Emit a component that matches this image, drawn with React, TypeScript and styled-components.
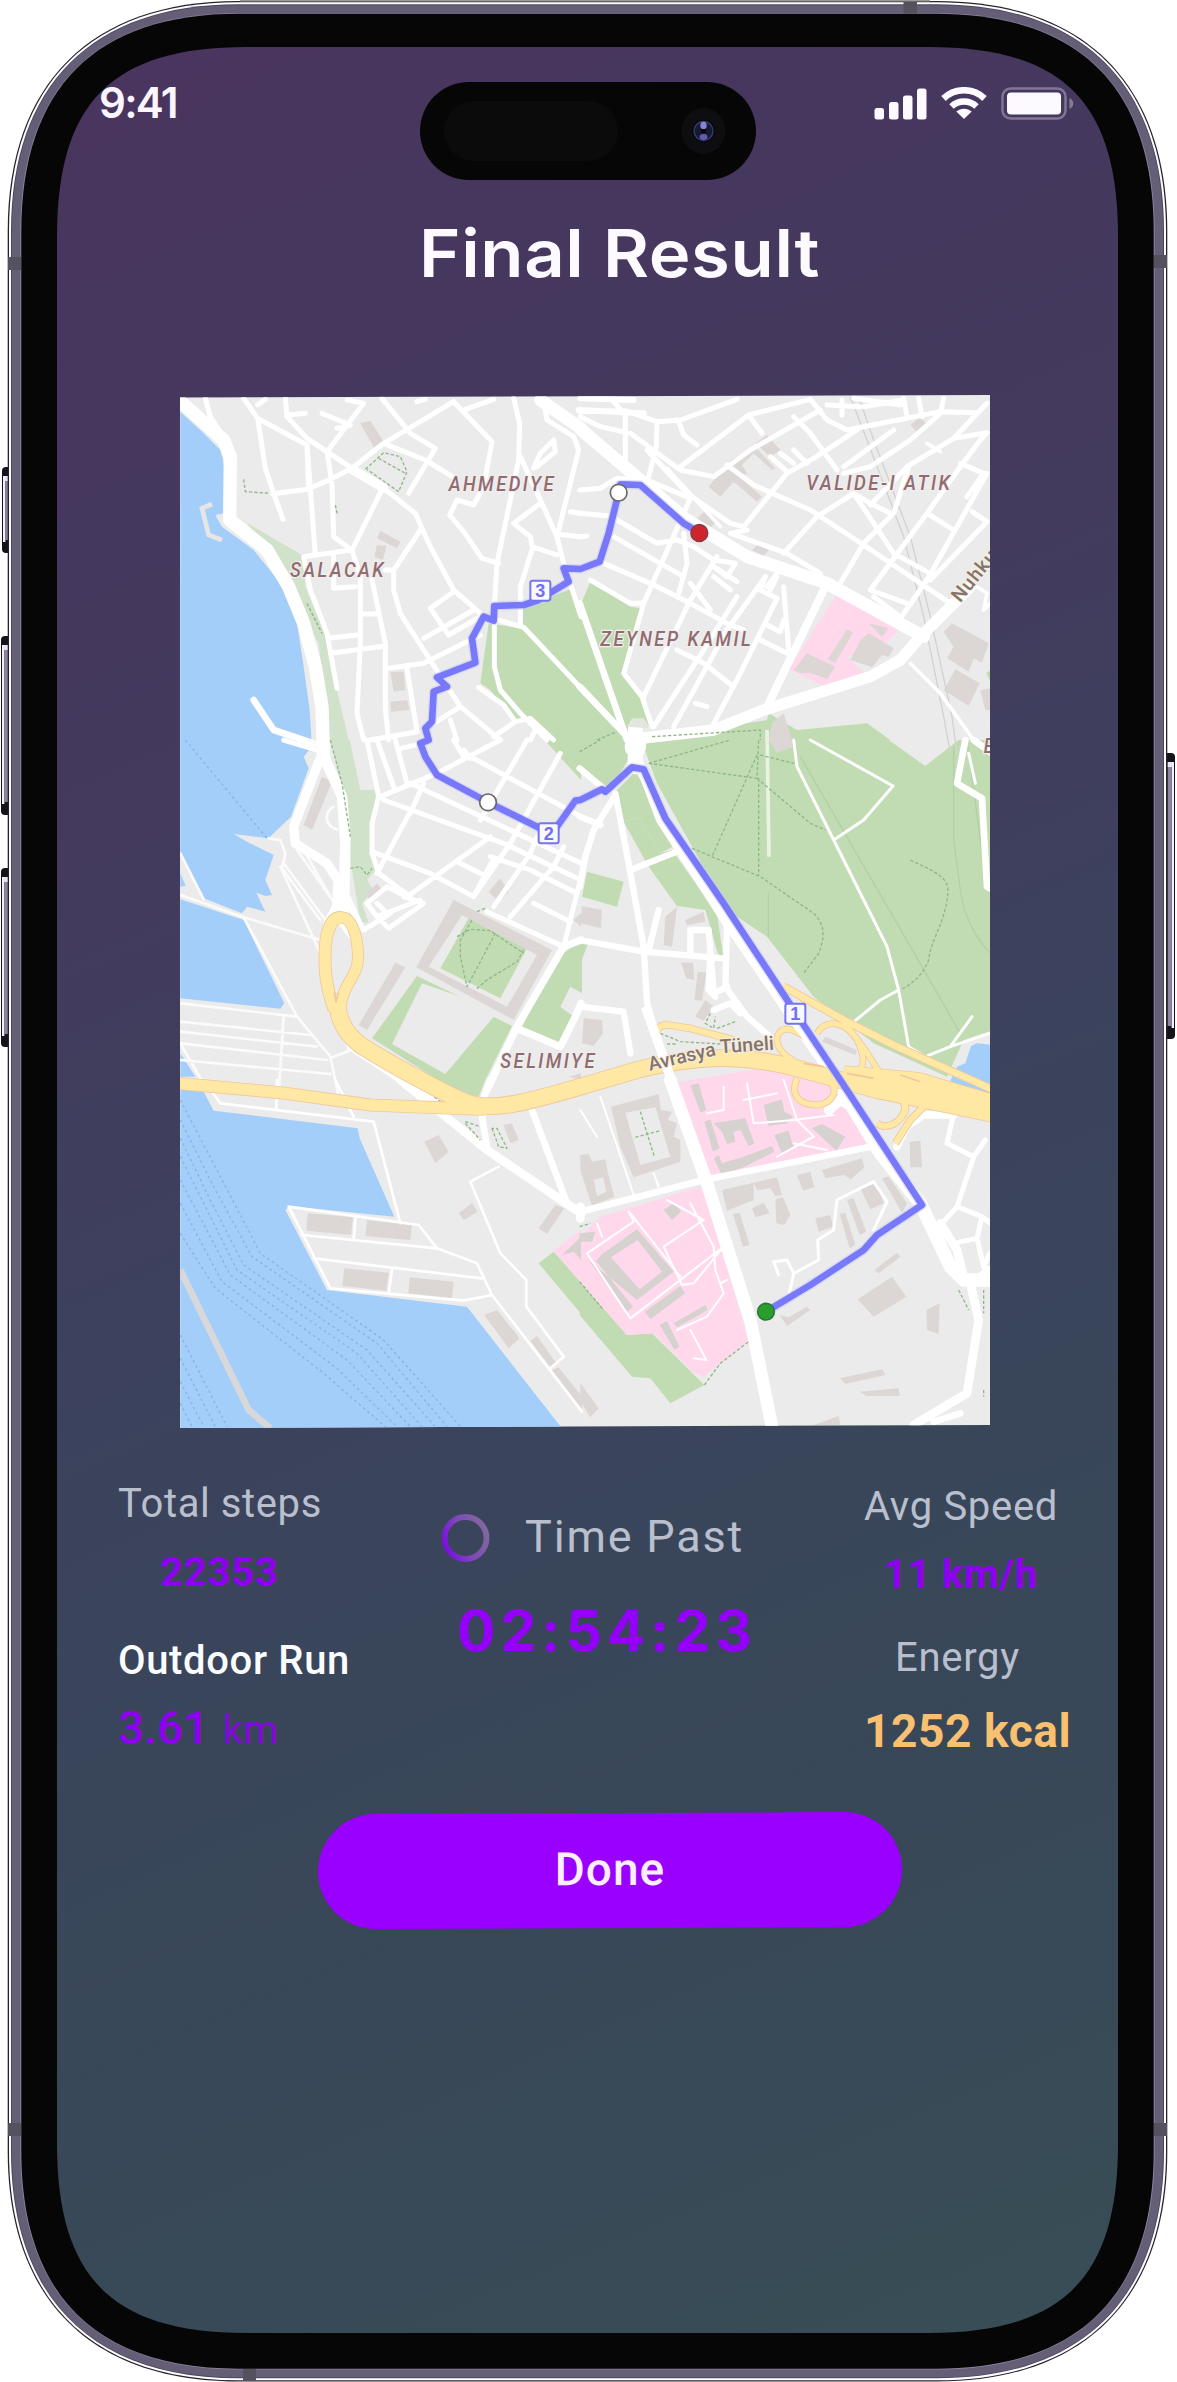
import React from 'react';
import styled, { createGlobalStyle } from 'styled-components';

const GlobalStyle = createGlobalStyle`
  html, body { margin: 0; padding: 0; background: #ffffff; }
  *, *::before, *::after { box-sizing: border-box; }
`;

/* ---------- geometry helpers ---------- */

/** Closed path of a rectangle with continuous (squircle) corners. */
const squircle = (l: number, t: number, r: number, b: number, e: number, c: number) =>
  `M${l} ${t + e}C${l} ${t + c} ${l + c} ${t} ${l + e} ${t}H${r - e}` +
  `C${r - c} ${t} ${r} ${t + c} ${r} ${t + e}V${b - e}` +
  `C${r} ${b - c} ${r - c} ${b} ${r - e} ${b}H${l + e}` +
  `C${l + c} ${b} ${l} ${b - c} ${l} ${b - e}Z`;

/* ---------- styled parts ---------- */

const Device = styled.main`
  position: relative;
  width: 1177px;
  height: 2382px;
  padding: 47px 59px 49px 57px;
  overflow: hidden;
  font-family: Roboto, 'Liberation Sans', sans-serif;
`;

const Bezel = styled.svg`
  position: absolute;
  inset: 0;
  display: block;
`;

const Screen = styled.div`
  position: relative;
  display: flex;
  flex-direction: column;
  width: 1061px;
  height: 2286px;
  background: linear-gradient(157deg, #4a355f 0%, #46375e 14%, #433a5d 30%, #3c425d 50%, #39465a 65%, #384957 84%, #384e56 100%);
  clip-path: path('${squircle(0, 0, 1061, 2286, 190, 55)}');
`;

const Island = styled.svg`
  position: absolute;
  left: 363px;
  top: 35px;
`;

const StatusBar = styled.header`
  display: flex;
  justify-content: space-between;
  align-items: flex-start;
  height: 166px;
  padding: 32px 43px 0 42px;
`;

const Clock = styled.time`
  font: 600 42px/48px Inter, Roboto, sans-serif;
  letter-spacing: -1.7px;
  color: #fbf6ff;
`;

const StatusIcons = styled.div`
  display: flex;
  align-items: flex-start;
  gap: 14px;
  padding-top: 8px;
`;

const Title = styled.h1`
  width: max-content;
  margin: 0 0 102px 362px;
  font: 600 66px/80px Inter, Roboto, sans-serif;
  letter-spacing: 0.6px;
  white-space: nowrap;
  color: #fdfaff;
  transform: scaleX(1.07);
  transform-origin: left;
`;

const MapCard = styled.figure`
  width: 810px;
  height: 1033px;
  margin: 0 0 0 123px;
  clip-path: polygon(0 2.5px, 100% 0, 100% 1030px, 0 100%);
`;

const Stats = styled.section`
  display: grid;
  grid-template-columns: 323px 423px 1fr;
  height: 385px;
  padding-left: 61px;
`;

const Column = styled.div<{ $top: number }>`
  display: flex;
  flex-direction: column;
  align-items: flex-start;
  width: max-content;
  padding-top: ${(p) => p.$top}px;
`;

type TextProps = {
  $size?: number;
  $weight?: number;
  $color?: string;
  $track?: number;
  $gap?: number;
  $indent?: number;
};

const Label = styled.span<TextProps>`
  margin: ${(p) => p.$gap ?? 0}px 0 0 ${(p) => p.$indent ?? 0}px;
  font-size: ${(p) => p.$size ?? 40}px;
  font-weight: ${(p) => p.$weight ?? 400};
  line-height: ${(p) => ((p.$size ?? 40) > 41 ? 54 : 48)}px;
  letter-spacing: ${(p) => p.$track ?? 0}px;
  color: ${(p) => p.$color ?? '#b9bfcd'};
  white-space: nowrap;
`;

const Value = styled(Label)`
  color: ${(p) => p.$color ?? '#8f00f2'};
`;

const Unit = styled.small`
  margin-left: 2px;
  font-size: 40px;
  font-weight: 400;
  letter-spacing: 0.4px;
  color: #8208dc;
`;

const TimeRow = styled.div`
  display: flex;
  align-items: center;
  gap: 35px;
`;

const Timer = styled.strong`
  margin: 35px 0 0 16px;
  font: 700 57px/64px Inter, Roboto, sans-serif;
  letter-spacing: 5px;
  white-space: nowrap;
  color: #9500fb;
`;

const DoneButton = styled.button`
  display: flex;
  align-items: center;
  justify-content: center;
  width: 584px;
  height: 115px;
  margin-left: 261px;
  padding: 0 0 4px;
  border: 0;
  border-radius: 58px;
  background: #9900ff;
  color: #fbeeff;
  font: 500 46px/54px Roboto, sans-serif;
  letter-spacing: 1px;
  transform: skewY(-0.22deg);
`;

/* ---------- map ---------- */

type P = { d: string; w?: number };

/** The map is authored in six sheets; each sheet has its own origin. */
const SHEETS = {
  a: 'translate(0 0)',
  b: 'translate(1230 0)',
  c: 'translate(0 1050)',
  d: 'translate(1230 1050)',
  e: 'translate(0 2070)',
  f: 'translate(1230 2070)',
} as const;

type Sheet = keyof typeof SHEETS;
type Layer = Partial<Record<Sheet, P[]>>;

const water: Layer = {
  a: [
    {
      d: 'M30 65L100 130L150 180L163 230L160 370L135 375L155 410L250 480L330 580L380 700L400 830L418 960L425 1070L400 1100L415 1135L362 1280L330 1310L295 1345L190 1332L230 1355L310 1395L285 1470L305 1515L285 1518L258 1508L285 1565L230 1550L215 1570L100 1525L60 1450L30 1390Z',
    },
  ],
  c: [
    { d: 'M30 400L46 438L30 440ZM30 478L220 540L342 790L330 806L30 775ZM30 940L75 1010L30 1010Z' },
  ],
  d: [{ d: 'M1110 1022L1130 980L1155 970L1172 918L1190 910L1240 915V1100Z' }],
  e: [
    { d: 'M30 20L100 35L130 92L562 145L568 175L672 410L355 378L345 390L470 630L890 680L1175 1045H30Z' },
  ],
};

const greens: Layer = {
  a: [
    { d: 'M1055 652L1200 598L1232 680V902L1060 720ZM955 700L1065 718L1232 892V1170L1130 1058L1070 990L1030 985L960 900L930 880Z' },
  ],
  b: [
    { d: 'M30 575L150 650L180 655L130 850L185 920L215 1000L140 1040L60 1060H-2V650Z' },
    { d: 'M-2 910L140 1050H-2ZM185 1050L560 990L565 970L650 1020L860 1000L930 1050Z' },
    { d: 'M1218 850L1232 838V880Z' },
  ],
  d: [
    { d: 'M190 20L210 0H925L1035 78L1135 0H1240V870L1150 900L1100 1010L880 910L700 770L560 590L440 510L230 130Z' },
    { d: 'M130 245L175 232L238 340L275 330L410 520L430 660L412 640L375 510L290 498L205 380Z' },
    { d: 'M-2 0H140L150 50L100 130L70 140L0 80ZM20 395L130 425L110 500L5 470ZM-2 610L22 615L0 670Z' },
    { d: 'M105 155L165 95L240 220L278 320L238 340L175 232L130 245Z' },
  ],
  c: [
    { d: 'M895 535L1070 625L990 775L810 685ZM1165 650L1235 600V760L1200 740L1170 800L1210 830L1160 920L1050 870Z' },
    { d: 'M740 708L865 768L755 730L665 912L825 1002L970 830L1025 858L930 1050H850L605 895Z' },
  ],
  e: [{ d: 'M815 0H945L925 50L870 40ZM1105 550L1150 515L1235 610V705Z' }],
  f: [{ d: 'M-2 605L140 765L215 760L372 915L270 970L210 895L155 890L-2 705Z' }],
};

const paleGreens: Layer = {
  a: [{ d: 'M232 400L395 495L405 590L470 745L500 900L535 1050H478L445 760Z' }],
  c: [{ d: 'M480 0H538L570 150H620L600 300L615 390L590 420L610 450L575 490L595 550L570 545L530 300L515 150Z' }],
};

const pinks: Layer = {
  b: [{ d: 'M770 612L960 712L900 780L800 800L850 848L730 888L625 838Z' }],
  d: [{ d: 'M270 1030L540 985L640 1000L800 1060V1100H300Z' }],
  f: [{ d: 'M290 10L760 0L800 90L840 130L870 200L400 305ZM-2 470L60 410L365 318L505 785L370 890L340 880L220 760L140 765L-2 605Z' }],
  e: [{ d: 'M1150 512L1232 450V610Z' }],
};

const buildings: Layer = {
  a: [
    { d: 'M570 100L600 92L640 155L610 172ZM630 422L690 455L680 475L620 445ZM620 465L648 468L638 510L612 500ZM660 845H700L705 900L670 905ZM660 935L710 930L718 960L662 965Z' },
  ],
  b: [
    { d: 'M525 160L560 135L600 180L570 200ZM445 215L520 165L585 235L575 240L520 190L485 225L500 250L480 262ZM385 290L430 235L460 245L545 320L530 335L460 275L420 320ZM350 385L378 360L412 392L385 418ZM515 480L540 455L570 475L550 498ZM990 105L1020 80L1045 110L1015 132Z' },
    { d: 'M1090 725L1115 700L1225 760L1205 818L1180 805L1165 845L1100 805L1120 770ZM1090 900L1125 838L1198 880L1165 948ZM1200 900L1232 895V960H1215ZM565 1050L575 1000L610 970L635 1050Z' },
    { d: 'M800 718L818 728L765 818L742 808ZM680 790L765 830L740 868L690 848L660 850L640 840ZM865 730L940 775L925 800L905 795L875 832L810 810L840 750ZM865 700L925 715L905 740Z' },
  ],
  c: [
    { d: 'M455 110L485 125L425 270L400 255ZM585 465L620 430L635 450L600 480ZM675 668L705 682L590 870L565 855ZM955 455L990 415L1015 455L985 485Z' },
    { d: 'M850 480L1145 630L1030 840L738 682ZM875 525L775 680L1010 800L1100 645Z' },
    { d: 'M1210 540L1232 520V560ZM1195 1010L1232 1000V1020Z' },
  ],
  d: [
    { d: 'M5 498L65 510L62 565L0 550ZM255 530L290 500L275 620L250 615ZM315 540L370 515L375 545L320 555ZM302 668L338 668L342 720L318 715ZM352 695L378 698L365 782L342 780ZM345 830L375 780L400 800L370 842ZM10 835L65 840L68 880L40 918L5 910ZM565 0H635V22L590 38ZM735 890L830 930L825 945L725 905Z' },
  ],
  e: [
    { d: 'M762 185L805 165L835 215L795 250ZM1000 135L1025 130L1045 180L1020 190ZM865 400L905 370L922 395L880 420ZM1105 445L1155 375L1182 385L1130 462ZM412 400L548 412L542 465L408 452ZM590 420L725 435L720 480L585 468ZM522 565L655 578L648 632L516 618ZM718 592L850 605L845 655L714 640ZM942 705L980 690L1048 775L1015 805ZM1080 782L1100 768L1158 850L1140 862ZM1145 870L1165 862L1235 950V990Z' },
  ],
  f: [
    { d: 'M92 80L235 42L242 90L275 95L262 120L290 130L280 170L300 180V245L160 292L120 200ZM135 98L180 255L270 230L225 82Z' },
    { d: 'M0 225L25 222L35 245L75 238L82 275L102 350L35 378L0 270ZM40 300L50 348L78 335L68 292Z' },
    { d: 'M425 330L520 308V360L440 392ZM520 308L590 292L605 345L585 348L570 325L530 330ZM585 358L608 352L630 405L612 435L588 430ZM515 385L550 368L568 400L525 412ZM650 285L690 275L702 322L668 332ZM725 270L845 235L852 262L812 298L790 285L735 295ZM458 402L478 398L508 495L488 500ZM705 415L750 405L758 440L715 455ZM778 402L795 398L825 495L808 505ZM800 360L820 355L858 455L838 465ZM840 325L890 310L910 370L870 388ZM905 295L925 290L980 370L965 398Z' },
    { d: 'M882 570L950 518L960 530L895 580ZM832 658L935 590L978 650L880 710ZM1038 690L1078 670L1075 762L1040 750ZM598 705L625 712L680 680L690 690L620 738ZM778 895L905 868L915 885L795 912ZM838 935L955 925L958 948H860ZM700 1035L775 1008L780 1035ZM988 185L1020 182L1025 262H990ZM0 910L55 985L30 1012L0 965Z' },
  ],
};

const clinics: Layer = {
  f: [
    { d: 'M330 15L355 10L378 90L360 98ZM372 125L390 118L418 205L398 215ZM400 130L495 115L522 190L505 198L480 150L460 155L465 185L440 192L425 155ZM400 235L415 225L425 250L485 232L575 198L582 215L490 262L425 285ZM550 75L605 58L612 95L638 108L620 130L565 138ZM582 165L625 152L640 205L605 222ZM695 145L725 132L795 170L768 212Z' },
    { d: 'M62 525L170 448L280 575L170 660L30 545L50 540ZM92 532L178 628L245 575L172 480ZM28 545L45 540L158 680L140 695ZM193 695L300 618L315 640L210 718ZM280 730L375 675L382 690L290 742ZM238 735L260 722L298 800L282 810ZM250 390L282 368L302 395L275 420ZM-2 460L45 455L35 485H-2Z' },
  ],
  e: [{ d: 'M1175 525L1232 470V540L1210 515Z' }],
};

const minorRoads: Layer = {
  a: [
    { d: 'M105 25L120 80L165 150M220 25L262 85L285 235L310 310L338 388M262 45L285 28M262 85L410 165L435 495M345 25L350 80L410 145L545 235M355 75L405 70M455 70L540 105L500 115M530 30L580 40L470 185L485 280L490 440L545 480M305 312L410 298L480 268L545 235L640 160L850 35M740 35L765 28M635 25L720 130L795 175L715 310M640 160L765 210L850 262M850 35L965 155L940 290L910 345L860 330L838 375L880 425L935 505L985 520M885 58L970 28M1030 25L1048 100L1045 210L980 520L972 650V830L990 900L1050 970L1130 1050M410 170L415 300' },
    { d: 'M545 238L640 295L735 370L780 470L850 600L930 670M635 298L545 480L400 500L420 600L470 730L500 895M545 480L570 560V760L560 970L580 1050M490 500V595L555 590M605 570L645 760V960L655 1050M575 672H618M475 745L560 735M480 790L645 768M655 835L760 820L930 735M760 745L910 660M750 420L670 540V600L690 670L760 780L870 950L990 1050M645 540H670M850 605L780 655L835 735L930 680M710 835L740 1025L600 1050M790 1000L870 950M840 990L860 1050' },
    { d: 'M1120 30L1130 90L1210 140L1225 180L1160 440M1050 200L1110 330L1160 440L1180 520M1090 235L1110 190L1150 150L1155 185L1100 230M1110 340L1030 400L1080 440L1085 470L1160 495M1160 432L1230 440M1200 365L1230 370M1085 480L1050 590V700M985 690L1060 712L1232 895M925 892L1000 945L1035 995L970 1040M1180 520L1232 680M1035 995L1080 985L1150 1050M1080 1050L1100 1010' },
  ],
  b: [
    { d: 'M-2 65L135 62L230 95L300 90L470 28M135 62V230M95 28L130 70M230 95L228 170L205 260M0 80L60 110L150 130L300 240L400 260L510 180L720 60M295 95L310 135L350 165M300 230L505 75L690 28M505 75L545 130M440 225L520 285L690 360L850 465L1110 640M690 28L740 90L800 120L1080 65L1190 68M640 80L690 130L770 240M830 120L700 205L620 250L490 410L450 400L320 310L200 180M570 200L620 245M600 190L640 220M640 180L680 220M740 45L840 50M785 30V75M820 25L960 45M850 50L970 30M970 25L980 80M1015 25L1025 80M1090 25L1080 70L990 150L870 230L790 250M790 230L940 120M1220 40L1120 145L980 230L870 345M1120 145L1220 128L1200 150L1140 230L1040 370L870 600M1140 220L1210 250L1160 320M1220 250L1040 570L960 685M1040 370L1120 420M1175 365L1220 395L1050 570M820 310L940 490L1040 545M870 340L820 310L710 380L610 490M985 230L940 370L850 460L780 580M930 370L870 340M870 600L980 640M880 620L960 680' },
    { d: 'M-2 300L60 295L110 265L200 270L330 325M-2 370L90 378L230 460L290 450L340 470L400 510M0 440L20 438M100 440L310 560M70 520L210 580L330 640L440 700L490 720M30 570L150 640H185M330 325L190 640L130 850L185 920L215 1010M310 430L320 520L295 610M410 500L330 630L190 920M400 510L465 520L440 560L400 530L470 575M400 560L450 600M330 580L390 660M555 560L440 720L280 1010M555 560L540 600L590 625L480 850L400 1000M610 590L625 780M590 560L570 600M560 705L600 725L610 690M470 620L370 780L220 1010M530 745L620 790M290 780L370 820L460 890M345 940L380 950M500 420L450 430L620 490L720 550M590 550L560 590' },
    { d: 'M990 820L1080 910L1180 1050M1230 640L1210 660L1220 610L1190 590M1040 160L1080 185M260 235L420 410', w: 11 },
  ],
  c: [
    { d: 'M440 30L340 0M590 0L625 170L605 250V340L625 400L720 470M620 0L670 140M675 0L710 130M630 170L800 100L990 0M850 0L880 50M690 25L760 10M640 180L1000 310L1232 420M720 130L1232 370M605 335L780 400L910 470L970 355M720 215L620 400M760 130L720 220M900 50L1232 230M1070 0L930 240M1170 40L1020 310L910 470M1100 290L1080 340L970 500M1180 320L1150 380L1020 530M960 290L710 470L650 440L590 490L620 530L750 480M620 490L650 520M620 530L655 565L760 490L700 470M580 570L660 520M860 365L940 405M960 350L1080 390L1220 460M1090 490L1200 545M950 515L1180 620M1225 440L1180 620M880 30L900 55' },
    { d: 'M1180 620L1232 600M1180 620L1040 860L950 1050M1040 865L1170 920L1215 830L1232 790', w: 22 },
  ],
  d: [
    { d: 'M-2 85L70 145M105 160L145 370L190 620L200 790L240 920L280 1060M105 165L40 270L15 350L-2 440M0 230L60 255M150 390L290 335M-2 600L190 635L430 655M235 510L205 630M330 640V570H385L400 760L440 740M440 560L435 740L500 830L580 900M0 800L130 815L150 940M390 640L385 750L405 770M400 810L450 790L480 820', w: 19 },
    { d: 'M640 0L650 80L760 300L920 620L955 750L985 920L1035 950L1110 920L1228 880M690 0L938 138L850 240L760 300M815 850L900 780L955 750M1110 920L1175 830M1165 40L1185 130', w: 9 },
    { d: 'M1155 0L1130 130L1205 175L1220 440L1240 450M1180 0L1235 40', w: 20 },
  ],
  e: [
    { d: 'M100 0L150 70L610 125L690 430M320 0L318 90M495 0L550 110M355 380L745 435L800 505L920 550L965 645L1235 995M355 380L480 625L880 662L965 645M395 465L800 505M430 535L935 595M555 415L550 480M665 570L655 640M985 260L900 305L990 520L1068 600V680L1180 830L1140 865', w: 8 },
  ],
  f: [
    { d: 'M60 50L160 345M0 90L50 170M220 280L235 320M145 395L160 425L20 520L150 715L430 500L340 610L305 615L250 500L370 420L260 360M150 400L300 590M330 370L400 500L405 570L430 640L380 710L290 750M330 750L378 840L340 835M50 430L65 470M430 20V90L380 100M500 10L520 130L640 120L760 105M640 190L740 210M610 0L650 120L700 170L590 230M490 60L590 40M440 600L420 610', w: 6 },
    { d: 'M625 650L640 580L715 540L712 480L760 450L770 360L880 305L920 365L880 450M640 580L620 540L580 545L595 585', w: 9 },
    { d: 'M1120 100L1100 190L1180 230L1215 180M1180 230L1130 380L1085 430M1130 380L1205 410L1190 475L1120 490M1190 475L1210 560L1228 520M1205 410L1230 430', w: 15 },
  ],
};

const majorRoads: Layer = {
  a: [
    { d: 'M25 30L160 150L180 200L178 390L290 480L355 590L400 700L435 830L455 950L460 1110', w: 40 },
    { d: 'M250 930L310 1020L430 1060', w: 20 },
    { d: 'M545 238L640 295', w: 28 },
    { d: 'M1110 30L1232 115', w: 38 },
  ],
  b: [
    { d: 'M-2 115L150 245L320 390L500 500L740 580L1030 740', w: 38 },
    { d: 'M1170 590L1020 740L960 810L870 860L550 960L400 1020L180 1045', w: 34 },
    { d: 'M740 580L560 950', w: 24 },
    { d: 'M-2 640L140 1050M-2 890L150 1050', w: 20 },
    { d: 'M0 25L160 30M-5 60L190 70', w: 18 },
  ],
  c: [
    { d: 'M455 40L370 260L375 310L470 370L515 440V520', w: 28 },
    { d: 'M465 60L515 170L525 300L520 530M505 430L500 520L560 600', w: 32 },
    { d: 'M470 550L520 450L570 560', w: 22 },
    { d: 'M540 920L800 1090', w: 22 },
  ],
  d: [
    { d: 'M160 0L180 80L240 240L440 550L700 930L830 1110', w: 26 },
    { d: 'M165 -30V80', w: 46 },
  ],
  e: [
    { d: 'M690 0L950 210L1232 400', w: 26 },
    { d: 'M960 0L930 80L950 200M1085 90L1190 370', w: 20 },
  ],
  f: [
    { d: 'M270 0L380 310L510 720L575 1040', w: 38 },
    { d: 'M780 20L900 220L1020 370L1110 560L1150 600L1240 600', w: 40 },
    { d: 'M0 395L370 300L870 200', w: 20 },
    { d: 'M0 380V415', w: 26 },
    { d: 'M1170 610L1195 720L1160 940L1000 1035', w: 26 },
    { d: 'M950 200L980 140L1030 105L1120 105', w: 22 },
    { d: 'M1080 430L1130 510L1150 590M1225 570L1180 610', w: 26 },
    { d: 'M745 90L780 60L830 90', w: 30 },
    { d: 'M1060 1025L1140 1000', w: 20 },
  ],
};

const portLines: Layer = {
  c: [
    { d: 'M30 340L100 478M30 465L220 532L450 600M220 532L380 830L480 950L505 1070M330 380L450 640M340 370L480 560M380 330L500 500M400 330L480 470M30 790L380 830M30 845L420 885M30 875L440 920M30 910L470 960M30 960L480 1002M340 830L325 1060M30 910L110 1050M480 955L555 925M295 295L330 300L345 340L335 385L450 540M490 200A36 36 0 0 0 500 268' },
  ],
};

const dashes: Layer = {
  a: [{ d: 'M220 268L225 305L300 310M585 238L640 188L690 200L710 245L685 305L590 238M625 205L705 250M410 640L455 730M495 345L500 370' }],
  b: [{ d: 'M50 1050L110 1025M215 1040L540 1020V1050' }],
  c: [{ d: 'M480 0L515 130L540 290M540 385L570 380L590 405L605 385M905 540L870 600V650L890 740L975 580M860 590L900 568L960 572L1060 640M1060 630L1040 665L950 720L915 750M920 515L945 505' }],
  d: [{ d: 'M-2 35L60 0M205 70L450 0M205 70L530 115L535 0M540 45L640 70M530 45L395 350M535 115V405M530 115L690 250L735 270M335 325L540 410L700 520C740 560 730 600 715 640L670 700M990 360C1050 390 1100 405 1103 450C1100 540 1050 600 1045 660C1030 700 1000 730 960 750M390 820L375 850L400 865L405 830M410 865L465 845M240 880L300 905L420 912M260 912H290' }],
  e: [{ d: 'M885 125L930 140M885 130L930 180M965 145L985 200L1010 205L980 145ZM780 40L815 70L840 75' }],
  f: [{ d: 'M180 95L222 230M165 172L240 152M372 915L420 850L505 785M1135 630L1165 690M1210 630V700M-2 440L30 430M-2 605L70 690M1210 930V950' }],
};

const ferryLines = [
  'M45 1050L290 1345',
  'M30 2130L150 2360L270 2590L640 2850L870 3110',
  'M30 2190L130 2390L245 2600L620 2860L830 3110',
  'M30 2245L115 2420L220 2625L590 2880L795 3110',
  'M30 2300L200 2640L560 2890L755 3110',
  'M30 2370L180 2655L530 2910L720 3110',
  'M30 2440L155 2675L500 2935L680 3110',
  'M30 2530L135 2695L460 2950L645 3110',
  'M30 2835L170 3110',
  'M30 2905L135 3110',
  'M30 2975L100 3110',
  'M30 3040L65 3110',
];

const highways: P[] = [
  { d: 'M25 2080L330 2108L600 2145L930 2158L1060 2140L1230 2096', w: 34 },
  { d: 'M512 1582C480 1582 464 1630 464 1700C464 1770 472 1800 492 1860', w: 34 },
  { d: 'M512 1582C545 1582 563 1640 563 1700C563 1765 520 1770 508 1860', w: 31 },
  { d: 'M497 1815C503 1890 520 1925 570 1965C640 2010 800 2100 890 2138C960 2165 1060 2140 1230 2090L1400 2040C1600 1990 1740 1995 1900 2040L2120 2100L2470 2172', w: 48 },
  { d: 'M1840 1790L2020 1890L2180 1970L2470 2100', w: 20 },
  { d: 'M1460 1925C1470 1890 1510 1910 1560 1915L1690 1950', w: 18 },
  { d: 'M1990 2070C1830 2010 1800 1960 1830 1925C1850 1905 1900 1925 1960 1995M1940 1930C1970 1880 2030 1900 2060 1950C2090 2010 2080 2040 2050 2060M2020 1900C2080 1960 2100 2010 2130 2050', w: 15 },
  { d: 'M1880 2065C1860 2110 1880 2145 1940 2145C1990 2140 2000 2100 1985 2085', w: 16 },
  { d: 'M2060 2090C2180 2110 2220 2130 2200 2170C2180 2210 2140 2215 2120 2200M2300 2110L2220 2190L2175 2260', w: 18 },
  { d: 'M2020 2060L2240 2080L2470 2148', w: 64 },
];

const routePath =
  'M1787 2765L1920 2685L2080 2580L2120 2535L2255 2445L2010 2070L1890 1890L1660 1540L1485 1285L1420 1138L1385 1132L1305 1205L1295 1198L1230 1230L1215 1232L1160 1310L1130 1325L955 1238L800 1155L765 1100L750 1060L775 1050L765 1015L785 995L790 905L830 890L800 862L915 818L905 745L940 680L970 692L972 648L1060 645L1105 630L1195 575L1180 535L1230 537L1288 515L1315 430L1342 320L1350 283L1410 285L1540 400L1587 428';

const Sheets = ({ layer, render }: { layer: Layer; render: (p: P, key: number) => React.ReactNode }) => (
  <>
    {(Object.keys(layer) as Sheet[]).map((s) => (
      <g key={s} transform={SHEETS[s]}>
        {layer[s]!.map(render)}
      </g>
    ))}
  </>
);

const Areas = ({ layer, fill }: { layer: Layer; fill: string }) => (
  <g fill={fill} fillRule="evenodd">
    <Sheets layer={layer} render={(p, i) => <path key={i} d={p.d} />} />
  </g>
);

const Lines = ({ layer, color, width, dash }: { layer: Layer; color: string; width: number; dash?: string }) => (
  <g fill="none" stroke={color} strokeLinejoin="round" strokeLinecap={dash ? 'butt' : 'round'} strokeDasharray={dash}>
    <Sheets layer={layer} render={(p, i) => <path key={i} d={p.d} strokeWidth={p.w ?? width} />} />
  </g>
);

const District = ({ x, y, w, children }: { x: number; y: number; w: number; children: string }) => (
  <text
    x={x}
    y={y}
    textLength={w}
    lengthAdjust="spacingAndGlyphs"
    fontFamily="Roboto, sans-serif"
    fontStyle="italic"
    fontWeight={500}
    fontSize={61}
    letterSpacing={8}
    fill="#906b70"
    stroke="#f2eeee"
    strokeWidth={8}
    strokeLinejoin="round"
    paintOrder="stroke"
  >
    {children}
  </text>
);

const Milestone = ({ x, y, n }: { x: number; y: number; n: number }) => (
  <g>
    <rect x={x - 30} y={y - 30} width={60} height={60} rx={7} fill="#f8f8ff" stroke="#7674f2" strokeWidth={6} />
    <text x={x} y={y + 20} textAnchor="middle" fontFamily="'Liberation Sans', Arial, sans-serif" fontWeight={700} fontSize={54} fill="#716ff0">
      {n}
    </text>
  </g>
);

const RouteMap = () => (
  <svg width="810" height="1033" viewBox="29 15 2430 3099" display="block">
    <rect x="29" y="15" width="2430" height="3099" fill="#ebebeb" />
    <Areas layer={water} fill="#a3cefa" />
    <g fill="none" stroke="#86b2ea" strokeWidth={4} strokeDasharray="8 9">
      {ferryLines.map((d) => (
        <path key={d} d={d} />
      ))}
    </g>
    <path d="M30 2640L235 3060L300 3115" fill="none" stroke="#d8d8da" strokeWidth={20} />
    <path d="M125 342L95 355L115 435L155 450" fill="none" stroke="#e6e6e6" strokeWidth={14} />
    <Areas layer={paleGreens} fill="#d0e2c9" />
    <Areas layer={greens} fill="#c1dcb3" />
    <Areas layer={pinks} fill="#ffd8ec" />
    <Areas layer={buildings} fill="#dcd7d5" />
    <Areas layer={clinics} fill="#d6d2d0" />
    <g fill="none" stroke="#d2d3cf" strokeWidth={4}>
      <path d="M2040 20L2090 150L2200 440L2260 680L2320 980L2340 1090M2065 20L2110 150L2220 440L2280 680L2345 980L2360 1090" />
      <path d="M1890 1100L2180 1600L2370 1930" stroke="#b3cfa5" />
      <path d="M2350 1070V1350L2370 1500C2380 1580 2420 1650 2460 1690M2390 1050L2450 1500" stroke="#b3cfa5" />
      <path d="M1794 1510V1640" stroke="#b3cfa5" />
    </g>
    <path d="M1790 1020L1796 1400" fill="none" stroke="#ffffff" strokeOpacity={0.65} strokeWidth={11} />
    <Lines layer={portLines} color="#fbfbfb" width={8} />
    <Lines layer={minorRoads} color="#ffffff" width={15} />
    <Lines layer={majorRoads} color="#ffffff" width={26} />
    <circle cx="1395" cy="1070" r="32" fill="#ffffff" />
    <path d="M1370 1010L1385 985H1420L1440 1015Z" fill="#e5e5e0" />
    <Lines layer={dashes} color="#8fb886" width={4} dash="10 6" />
    <g fill="none" strokeLinejoin="round">
      {highways.map((p) => (
        <path key={p.d} d={p.d} stroke="#f0c79b" strokeWidth={(p.w ?? 20) + 5} />
      ))}
      {highways.map((p) => (
        <path key={p.d} d={p.d} stroke="#ffe8a4" strokeWidth={p.w} />
      ))}
      <path d="M1900 2020L1960 2030M2030 2050L2110 2065M2190 2055L2250 2075M492 1808L497 1835L504 1808" stroke="#f0c79b" strokeWidth={5} />
    </g>
    <path d="M1425 1850L1510 2090" stroke="#ffffff" strokeWidth={28} fill="none" />
    <path d="M1870 1890L1960 2010" stroke="#ffffff" strokeWidth={26} fill="none" />

    <path d={routePath} fill="none" stroke="#c9c8fa" strokeOpacity={0.55} strokeWidth={28} strokeLinejoin="round" />
    <path d={routePath} fill="none" stroke="#7878fb" strokeWidth={20} strokeLinejoin="round" />

    <District x={835} y={303} w={322}>AHMEDIYE</District>
    <District x={359} y={560} w={288}>SALACAK</District>
    <District x={1908} y={300} w={438}>VALIDE-I ATIK</District>
    <District x={1290} y={767} w={458}>ZEYNEP KAMIL</District>
    <District x={990} y={2035} w={290}>SELIMIYE</District>
    <District x={2440} y={1090} w={36}>E</District>
    <g fontFamily="Roboto, sans-serif" fontWeight={500} fill="#86736a" stroke="#f4efe2" strokeWidth={6} paintOrder="stroke">
      <text transform="translate(1438 2042) rotate(-13)" fontSize={58} textLength={206} lengthAdjust="spacingAndGlyphs">
        Avrasya
      </text>
      <text transform="translate(1650 1990) rotate(-4)" fontSize={58} textLength={162} lengthAdjust="spacingAndGlyphs">
        Tüneli
      </text>
      <text transform="translate(2370 640) rotate(-51)" fontSize={58} letterSpacing={3}>
        Nuhku
      </text>
    </g>

    <Milestone x={1110} y={602} n={3} />
    <Milestone x={1135} y={1330} n={2} />
    <Milestone x={1875} y={1871} n={1} />
    <g stroke="#6b6868" strokeWidth={5}>
      <circle cx={1345} cy={308} r={25} fill="#ffffff" />
      <circle cx={953} cy={1237} r={25} fill="#ffffff" />
      <circle cx={1587} cy={429} r={25} fill="#d0242b" stroke="#8c3a45" />
      <circle cx={1787} cy={2765} r={25} fill="#2a9d2c" stroke="#277a37" />
    </g>
  </svg>
);

/* ---------- icons and hardware ---------- */

const SignalIcon = () => (
  <svg width="53" height="33" viewBox="0 0 53 33" fill="#fdfaff">
    <rect x="0.5" y="21" width="9.5" height="11.5" rx="2.5" />
    <rect x="15" y="15" width="9.5" height="17.5" rx="2.5" />
    <rect x="29" y="8.5" width="9.5" height="24" rx="2.5" />
    <rect x="43" y="1.5" width="9.5" height="31" rx="2.5" />
  </svg>
);

const WifiIcon = () => (
  <svg width="46" height="33" viewBox="0 0 46 33" fill="none" stroke="#fdfaff">
    <path d="M2.5 11.5C14 0.5 32 0.5 43.5 11.5" strokeWidth="6.6" />
    <path d="M10.5 19.5C17.5 12.8 28.5 12.8 35.5 19.5" strokeWidth="6.4" />
    <path d="M23 32L15.3 24.6C19.5 20.7 26.5 20.7 30.7 24.6Z" fill="#fdfaff" stroke="none" />
  </svg>
);

const BatteryIcon = () => (
  <svg width="74" height="33" viewBox="0 0 74 33">
    <rect x="1.5" y="1.5" width="63" height="30" rx="8" fill="none" stroke="#a299b4" strokeOpacity="0.65" strokeWidth="2.4" />
    <rect x="6" y="5.5" width="54" height="22" rx="4" fill="#fdfaff" />
    <path d="M68.5 11C73.5 13 73.5 20 68.5 22Z" fill="#a299b4" fillOpacity="0.7" />
  </svg>
);

const ProgressRing = () => (
  <svg width="49" height="49" viewBox="0 0 49 49">
    <defs>
      <linearGradient id="ring" x1="0" y1="0.75" x2="1" y2="0.35">
        <stop offset="0" stopColor="#7a0ee0" />
        <stop offset="0.5" stopColor="#7f48b8" />
        <stop offset="1" stopColor="#80689f" />
      </linearGradient>
    </defs>
    <circle cx="24.5" cy="25" r="21" fill="none" stroke="url(#ring)" strokeWidth="5.8" />
  </svg>
);

const SideKey = ({ y, h, x = 0, flip }: { y: number; h: number; x?: number; flip?: boolean }) => (
  <g transform={flip ? `translate(1176 ${y}) scale(-1 1)` : `translate(${x} ${y})`}>
    <rect x="1" y="0" width="14" height={h} rx="4" fill="#15131b" />
    <rect x="2" y="9" width="2.4" height={h - 20} fill="#f4f1ff" />
    <rect x="4.4" y="13" width="4" height={h - 26} fill="#8d859d" />
    <rect x="3.5" y="9" width="5" height="5" fill="#e9e5f5" />
  </g>
);

const DeviceFrame = () => (
  <Bezel width="1177" height="2382" viewBox="0 0 1177 2382" aria-hidden="true">
    <SideKey y={467} h={86} x={1} />
    <SideKey y={636} h={179} />
    <SideKey y={868} h={179} />
    <SideKey y={753} h={286} flip />
    <path d={squircle(7.7, 1, 1167.3, 2381.5, 230, 83)} fill="#25222c" />
    <path d={squircle(9, 2.2, 1166, 2380.3, 229, 82)} fill="#ffffff" />
    <path d={squircle(11, 4.2, 1164, 2378.3, 227, 81)} fill="#4c4660" />
    <path d={squircle(12, 5.2, 1163, 2377.3, 226, 80)} fill="#645e76" />
    <path d={squircle(20.3, 13, 1154.7, 2369.5, 219, 75)} fill="#8b84a0" />
    <path d={squircle(21.3, 13.8, 1153.7, 2368.7, 218, 74)} fill="#060606" />
    <g fill="#55515f">
      <rect x="8" y="257" width="13" height="13" />
      <rect x="1154" y="255" width="13" height="13" />
      <rect x="8" y="2123" width="13" height="13" />
      <rect x="1154" y="2123" width="13" height="13" />
      <rect x="903.5" y="1.5" width="13.5" height="12" />
      <rect x="243" y="2369" width="13" height="12" />
    </g>
    <path d="M240 1H930" stroke="#7b7876" strokeWidth="1.6" />
  </Bezel>
);

const CameraIsland = () => (
  <Island width="336" height="98" viewBox="0 0 336 98" aria-hidden="true">
    <rect width="336" height="98" rx="49" fill="#060606" />
    <rect x="24" y="19" width="174" height="60" rx="30" fill="#0b0b0b" />
    <ellipse cx="283.5" cy="49" rx="22" ry="23" fill="#0e0e10" />
    <circle cx="283.5" cy="49" r="11" fill="#050509" />
    <circle cx="283.5" cy="49" r="9.5" fill="#171930" stroke="#2f4270" strokeWidth="1.3" />
    <ellipse cx="283.5" cy="43.5" rx="3.2" ry="3.8" fill="#8a82d4" />
    <ellipse cx="283.5" cy="55" rx="4" ry="2.9" fill="#625bb4" />
    <rect x="281" y="47" width="5" height="4" rx="1" fill="#07070c" />
  </Island>
);

/* ---------- page ---------- */

export default function App() {
  return (
    <>
      <GlobalStyle />
      <Device>
        <DeviceFrame />
        <Screen>
          <StatusBar>
            <Clock>9:41</Clock>
            <StatusIcons>
              <SignalIcon />
              <WifiIcon />
              <BatteryIcon />
            </StatusIcons>
          </StatusBar>
          <Title>Final Result</Title>
          <MapCard>
            <RouteMap />
          </MapCard>
          <Stats>
            <Column $top={52}>
              <Label $track={0.6}>Total steps</Label>
              <Value $weight={700} $gap={21} $indent={42} $track={0.8}>22353</Value>
              <Label $weight={500} $color="#fbfcff" $gap={40} $track={0.65}>Outdoor Run</Label>
              <Value $size={46} $weight={500} $gap={16}>
                3.61 <Unit>km</Unit>
              </Value>
            </Column>
            <Column $top={82}>
              <TimeRow>
                <ProgressRing />
                <Label $size={45} $track={1.8}>Time Past</Label>
              </TimeRow>
              <Timer>02:54:23</Timer>
            </Column>
            <Column $top={55}>
              <Label $track={0.7}>Avg Speed</Label>
              <Value $weight={700} $gap={20} $indent={20} $track={0.7}>11 km/h</Value>
              <Label $gap={35} $indent={31} $track={0.7}>Energy</Label>
              <Value $size={46} $weight={700} $color="#f8c06f" $gap={22} $track={0.6}>1252 kcal</Value>
            </Column>
          </Stats>
          <DoneButton>Done</DoneButton>
          <CameraIsland />
        </Screen>
      </Device>
    </>
  );
}
